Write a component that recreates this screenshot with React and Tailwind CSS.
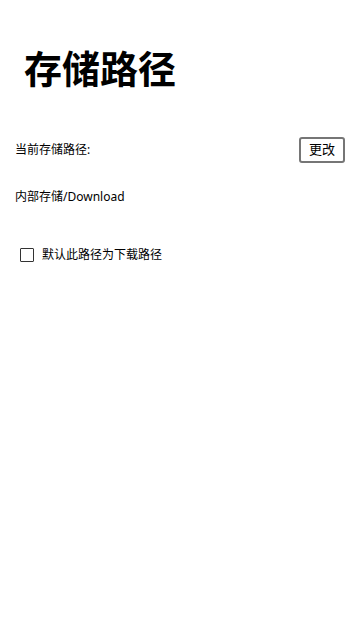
export default function App() {
  return (
    <div className="w-[360px] h-[640px] bg-white text-black" style={{ fontFamily: '"Noto Sans", "Noto Sans CJK SC", sans-serif' }}>
      <div className="pt-[42px] pl-[24px]">
        <h1 className="text-[38px] leading-[52px] font-bold">存储路径</h1>
      </div>
      <div className="mt-[42px] pl-[15px] pr-[15px] flex items-center justify-between h-[28px]">
        <span className="text-[12px]">当前存储路径:</span>
        <button className="w-[46px] h-[26px] border-2 border-[#767676] rounded-[3px] text-[13px] flex items-center justify-center bg-white">更改</button>
      </div>
      <div className="mt-[24px] pl-[15px] text-[12px] leading-[18px]">内部存储/Download</div>
      <label className="mt-[40px] ml-[20px] flex items-center gap-[8px] h-[18px]">
        <span className="w-[14px] h-[14px] border border-[#333] rounded-[1px] bg-white"></span>
        <span className="text-[12px]">默认此路径为下载路径</span>
      </label>
    </div>
  );
}
